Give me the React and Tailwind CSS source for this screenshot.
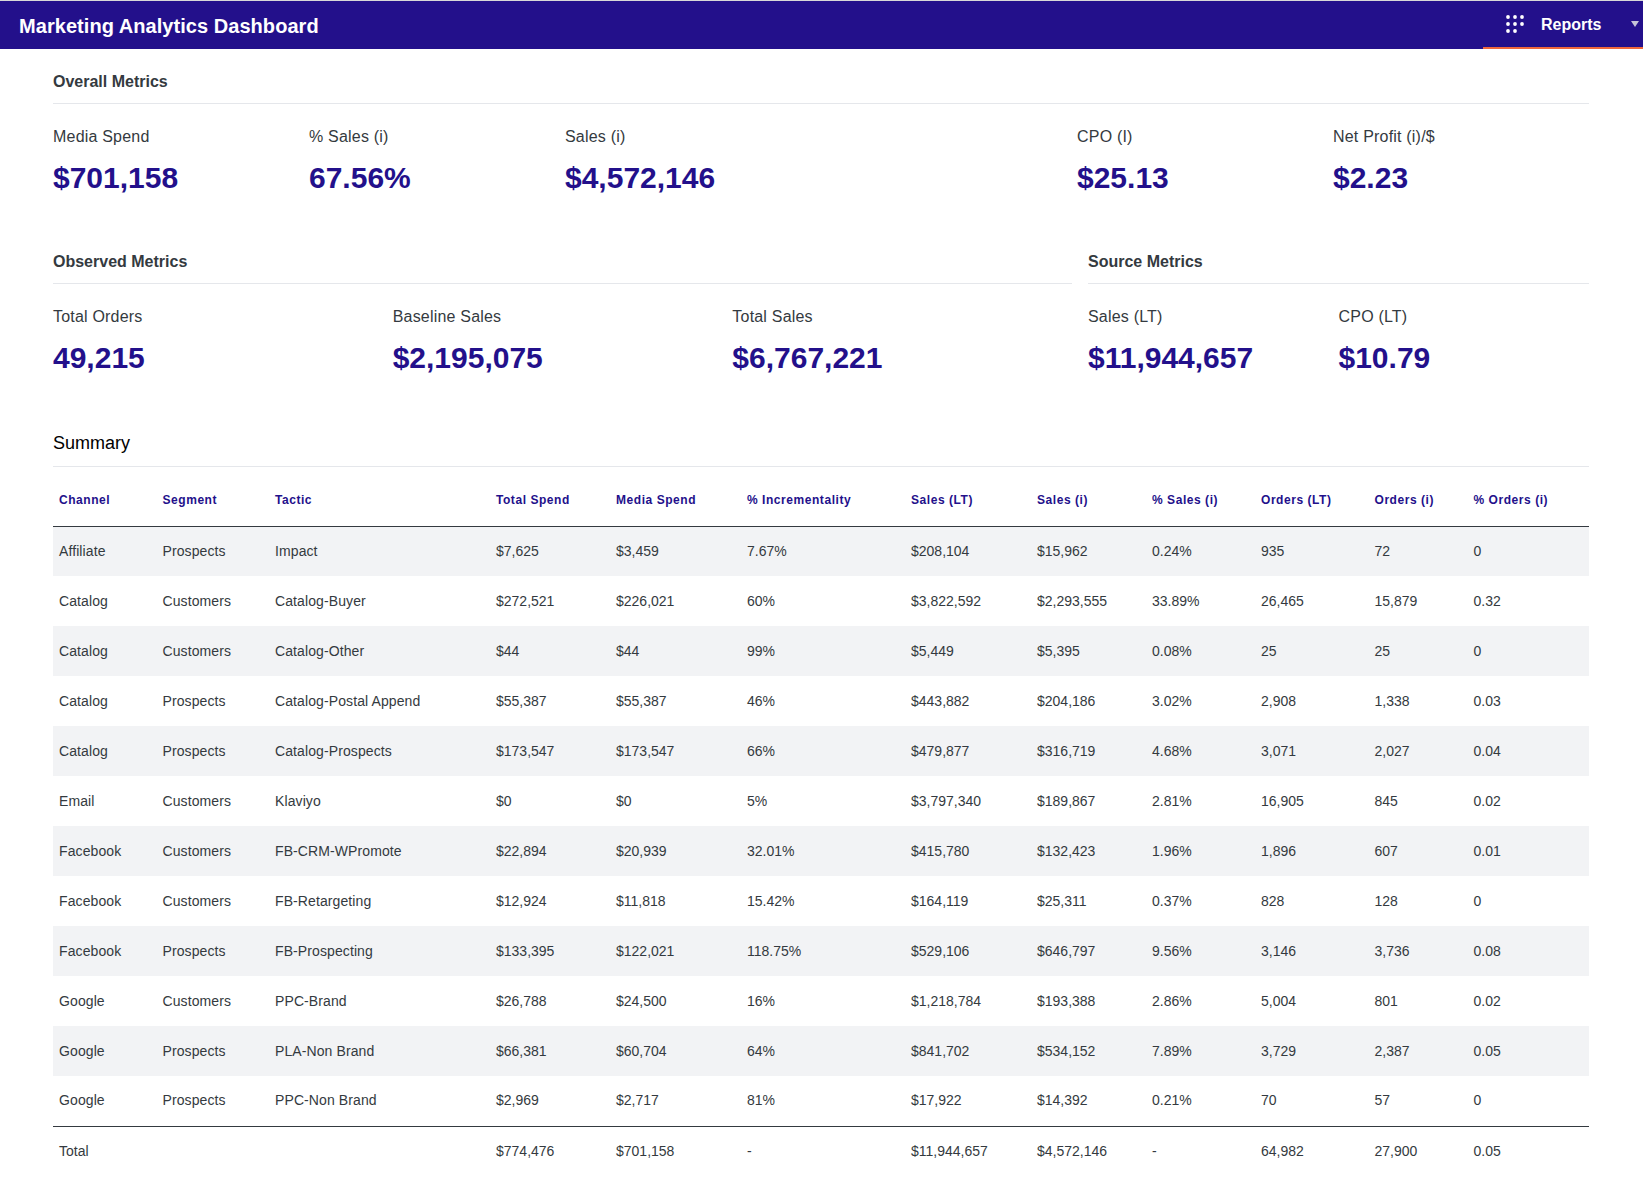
const OVERALL = [
  { label: 'Media Spend', value: '$701,158' },
  { label: '% Sales (i)', value: '67.56%' },
  { label: 'Sales (i)', value: '$4,572,146', wide: true },
  { label: 'CPO (I)', value: '$25.13' },
  { label: 'Net Profit (i)/$', value: '$2.23' },
]

const OBSERVED = [
  { label: 'Total Orders', value: '49,215' },
  { label: 'Baseline Sales', value: '$2,195,075' },
  { label: 'Total Sales', value: '$6,767,221' },
]

const SOURCE = [
  { label: 'Sales (LT)', value: '$11,944,657' },
  { label: 'CPO (LT)', value: '$10.79' },
]

const COLUMNS = [
  ['Channel', 'w-[103.5px]'],
  ['Segment', 'w-[112.5px]'],
  ['Tactic', 'w-[221px]'],
  ['Total Spend', 'w-[120px]'],
  ['Media Spend', 'w-[131px]'],
  ['% Incrementality', 'w-[164px]'],
  ['Sales (LT)', 'w-[126px]'],
  ['Sales (i)', 'w-[115px]'],
  ['% Sales (i)', 'w-[109px]'],
  ['Orders (LT)', 'w-[113.5px]'],
  ['Orders (i)', 'w-[99px]'],
  ['% Orders (i)', 'w-[121.5px]'],
]

const ROWS = [
  ['Affiliate', 'Prospects', 'Impact', '$7,625', '$3,459', '7.67%', '$208,104', '$15,962', '0.24%', '935', '72', '0'],
  ['Catalog', 'Customers', 'Catalog-Buyer', '$272,521', '$226,021', '60%', '$3,822,592', '$2,293,555', '33.89%', '26,465', '15,879', '0.32'],
  ['Catalog', 'Customers', 'Catalog-Other', '$44', '$44', '99%', '$5,449', '$5,395', '0.08%', '25', '25', '0'],
  ['Catalog', 'Prospects', 'Catalog-Postal Append', '$55,387', '$55,387', '46%', '$443,882', '$204,186', '3.02%', '2,908', '1,338', '0.03'],
  ['Catalog', 'Prospects', 'Catalog-Prospects', '$173,547', '$173,547', '66%', '$479,877', '$316,719', '4.68%', '3,071', '2,027', '0.04'],
  ['Email', 'Customers', 'Klaviyo', '$0', '$0', '5%', '$3,797,340', '$189,867', '2.81%', '16,905', '845', '0.02'],
  ['Facebook', 'Customers', 'FB-CRM-WPromote', '$22,894', '$20,939', '32.01%', '$415,780', '$132,423', '1.96%', '1,896', '607', '0.01'],
  ['Facebook', 'Customers', 'FB-Retargeting', '$12,924', '$11,818', '15.42%', '$164,119', '$25,311', '0.37%', '828', '128', '0'],
  ['Facebook', 'Prospects', 'FB-Prospecting', '$133,395', '$122,021', '118.75%', '$529,106', '$646,797', '9.56%', '3,146', '3,736', '0.08'],
  ['Google', 'Customers', 'PPC-Brand', '$26,788', '$24,500', '16%', '$1,218,784', '$193,388', '2.86%', '5,004', '801', '0.02'],
  ['Google', 'Prospects', 'PLA-Non Brand', '$66,381', '$60,704', '64%', '$841,702', '$534,152', '7.89%', '3,729', '2,387', '0.05'],
  ['Google', 'Prospects', 'PPC-Non Brand', '$2,969', '$2,717', '81%', '$17,922', '$14,392', '0.21%', '70', '57', '0'],
]

const TOTAL = ['Total', '', '', '$774,476', '$701,158', '-', '$11,944,657', '$4,572,146', '-', '64,982', '27,900', '0.05']

function SectionTitle({ children }) {
  return (
    <div className="h-[55px] border-b border-[#e5e7eb] pt-[21px] text-[16px] leading-[24px] font-bold text-[#343a40]">
      {children}
    </div>
  )
}

function Metric({ label, value, className = '' }) {
  return (
    <div className={className}>
      <div className="text-[16px] leading-[24px] tracking-[0.2px] text-[#343a40]">{label}</div>
      <div className="mt-[11px] mb-[1px] text-[30px] leading-[36px] font-bold text-[#23108b]">{value}</div>
    </div>
  )
}

// 3x3 launcher dots, the last one is missing in the reference
function GridDots() {
  const dots = [3, 10, 17]
  return (
    <svg width="20" height="20" viewBox="0 0 20 20" fill="currentColor" className="text-white">
      {dots.map((y) =>
        dots.map((x) =>
          x === 17 && y === 17 ? null : <circle key={`${x}-${y}`} cx={x} cy={y} r="1.9" />
        )
      )}
    </svg>
  )
}

export default function App() {
  return (
    <div className="min-h-[1184px] bg-white font-['Liberation_Sans',Arial,sans-serif] text-[#343a40]">
      <div className="h-px bg-[#d8d8d8]" />
      <header className="flex h-[48px] items-center justify-between bg-[#23108b] text-white">
        <h1 className="mt-px pl-[19px] text-[20px] leading-[28px] tracking-[0.05px] font-bold">Marketing Analytics Dashboard</h1>
        <div className="flex h-full w-[160px] items-center border-b-2 border-[#f0683c] pl-[22px]">
          <GridDots />
          <span className="mt-[2px] ml-[16px] text-[16px] font-bold">Reports</span>
          <span className="mr-[4px] ml-auto h-0 w-0 border-x-[4px] border-t-[6px] border-x-transparent border-t-[#c5c3d8]" />
        </div>
      </header>

      <main className="px-[53px] pr-[54px]">
        <section>
          <SectionTitle>Overall Metrics</SectionTitle>
          <div className="grid grid-cols-6 pt-[21px]">
            {OVERALL.map((m) => (
              <Metric key={m.label} label={m.label} value={m.value} className={m.wide ? 'col-span-2' : ''} />
            ))}
          </div>
        </section>

        <section className="mt-[32px] flex gap-[16px]">
          <div className="w-[1019px]">
            <SectionTitle>Observed Metrics</SectionTitle>
            <div className="grid grid-cols-3 pt-[21px]">
              {OBSERVED.map((m) => (
                <Metric key={m.label} label={m.label} value={m.value} />
              ))}
            </div>
          </div>
          <div className="flex-1">
            <SectionTitle>Source Metrics</SectionTitle>
            <div className="grid grid-cols-2 pt-[21px]">
              {SOURCE.map((m) => (
                <Metric key={m.label} label={m.label} value={m.value} />
              ))}
            </div>
          </div>
        </section>

        <section className="mt-[35px]">
          <div className="h-[55px] border-b border-[#e5e7eb] pt-[19px] text-[18px] leading-[24px] text-black">Summary</div>
          <table className="w-full table-fixed border-collapse text-[14px] text-[#343a40]">
            <colgroup>
              {COLUMNS.map(([name, width]) => (
                <col key={name} className={width} />
              ))}
            </colgroup>
            <thead>
              <tr className="h-[59px] border-b border-[#343a40]">
                {COLUMNS.map(([name]) => (
                  <th key={name} className="px-[6px] pt-[8px] text-left text-[12px] font-bold tracking-[0.55px] whitespace-nowrap text-[#23108b]">
                    {name}
                  </th>
                ))}
              </tr>
            </thead>
            <tbody>
              {ROWS.map((row, i) => (
                <tr key={i} className={`h-[50px] ${i % 2 === 0 ? 'bg-[#f2f3f5]' : ''}`}>
                  {row.map((cell, j) => (
                    <td key={j} className={`px-[6px] whitespace-nowrap ${j < 3 ? 'tracking-[0.1px]' : ''}`}>{cell}</td>
                  ))}
                </tr>
              ))}
            </tbody>
            <tfoot>
              <tr className="h-[50px] border-t border-[#343a40]">
                {TOTAL.map((cell, j) => (
                  <td key={j} className="px-[6px] whitespace-nowrap">{cell}</td>
                ))}
              </tr>
            </tfoot>
          </table>
        </section>
      </main>
    </div>
  )
}
